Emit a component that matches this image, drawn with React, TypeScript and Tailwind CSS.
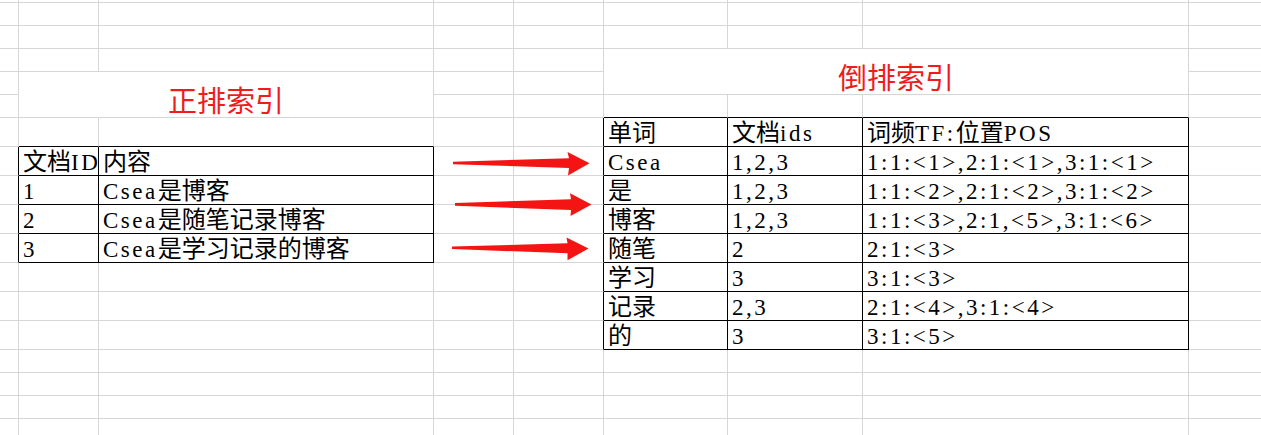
import React from "react";

const cjkTest = /[\u2E80-\u9FFF\uF900-\uFAFF\uFF00-\uFFEF\u3000-\u303F]/;
const splitRe = /[\u2E80-\u9FFF\uF900-\uFAFF\uFF00-\uFFEF\u3000-\u303F]+|[^\u2E80-\u9FFF\uF900-\uFAFF\uFF00-\uFFEF\u3000-\u303F]+/g;

function Txt({ s }: { s: string }) {
  const parts = s.match(splitRe) ?? [];
  return (
    <span className="leading-none text-black">
      {parts.map((p, i) =>
        cjkTest.test(p) ? (
          <span key={i} className="font-['Noto_Sans_CJK_SC',sans-serif] text-[24px] leading-none">
            {p}
          </span>
        ) : (
          <span
            key={i}
            className="font-['Liberation_Serif','Noto_Sans_CJK_SC',serif] text-[23px] leading-none tracking-[2.5px]"
          >
            {p}
          </span>
        )
      )}
    </span>
  );
}

const content: Record<string, string> = {
  "7,1": "文档ID",
  "7,2": "内容",
  "8,1": "1",
  "8,2": "Csea是博客",
  "9,1": "2",
  "9,2": "Csea是随笔记录博客",
  "10,1": "3",
  "10,2": "Csea是学习记录的博客",
  "6,5": "单词",
  "6,6": "文档ids",
  "6,7": "词频TF:位置POS",
  "7,5": "Csea",
  "7,6": "1,2,3",
  "7,7": "1:1:<1>,2:1:<1>,3:1:<1>",
  "8,5": "是",
  "8,6": "1,2,3",
  "8,7": "1:1:<2>,2:1:<2>,3:1:<2>",
  "9,5": "博客",
  "9,6": "1,2,3",
  "9,7": "1:1:<3>,2:1,<5>,3:1:<6>",
  "10,5": "随笔",
  "10,6": "2",
  "10,7": "2:1:<3>",
  "11,5": "学习",
  "11,6": "3",
  "11,7": "3:1:<3>",
  "12,5": "记录",
  "12,6": "2,3",
  "12,7": "2:1:<4>,3:1:<4>",
  "13,5": "的",
  "13,6": "3",
  "13,7": "3:1:<5>",
};

function inTable(r: number, c: number) {
  return (r >= 7 && r <= 10 && c >= 1 && c <= 2) || (r >= 6 && r <= 13 && c >= 5 && c <= 7);
}

const covered = new Set(["4,2", "5,1", "5,2", "3,6", "3,7", "4,5", "4,6", "4,7"]);

const ROWS = 18;
const COLS = 9;

export default function App() {
  const cells: React.ReactNode[] = [];
  for (let r = 0; r < ROWS; r++) {
    for (let c = 0; c < COLS; c++) {
      const key = `${r},${c}`;
      if (covered.has(key)) continue;
      let cs = 1;
      let rs = 1;
      let title: string | null = null;
      let spanCls = "";
      if (r === 4 && c === 1) {
        cs = 2;
        rs = 2;
        title = "正排索引";
        spanCls = "col-span-2 row-span-2";
      } else if (r === 3 && c === 5) {
        cs = 3;
        rs = 2;
        title = "倒排索引";
        spanCls = "col-span-3 row-span-2";
      }
      const rEnd = r + rs - 1;
      const cEnd = c + cs - 1;
      const rightBlack = inTable(r, cEnd) || inTable(r, cEnd + 1);
      const bottomBlack = inTable(rEnd, c) || inTable(rEnd + 1, c);
      const rightCls =
        cEnd === COLS - 1 ? "" : rightBlack ? "border-r border-r-black" : "border-r border-r-[#d6d6d6]";
      const bottomCls = bottomBlack ? "border-b border-b-black" : "border-b border-b-[#d6d6d6]";
      const text = content[key];
      if (title) {
        cells.push(
          <div key={key} className={`${spanCls} ${rightCls} ${bottomCls} flex items-end justify-center pb-[3px]`}>
            <span className="font-['Noto_Sans_CJK_SC',sans-serif] text-[29px] leading-[30px] text-[#f01c1c]">
              {title}
            </span>
          </div>
        );
      } else {
        cells.push(
          <div
            key={key}
            className={`${rightCls} ${bottomCls} flex items-end pl-[4px] pb-[1px] whitespace-nowrap font-['Liberation_Serif',serif] text-[23px] leading-none`}
          >
            {text ? <Txt s={text} /> : null}
          </div>
        );
      }
    }
  }

  return (
    <div className="relative w-[1261px] h-[435px] overflow-hidden bg-white">
      <div className="grid grid-cols-[19px_80px_335px_80px_90px_124px_135px_326px_72px] grid-rows-[3px_repeat(5,23px)_repeat(8,29px)_repeat(4,23px)]">
        {cells}
      </div>
      <svg className="absolute left-0 top-0 pointer-events-none" width="1261" height="435" viewBox="0 0 1261 435">
        <polygon
          fill="#f51414"
          points="453,161.7 569,158.3 567.5,152 589.5,163.3 568,175.5 569,168 453,164.3"
        />
        <polygon
          fill="#f51414"
          points="455,203 571,199.3 570,193.3 591.5,204.5 570.5,216 571,210 455,205.8"
        />
        <polygon
          fill="#f51414"
          points="452,246.5 567.5,243.3 566.5,237.5 588.5,248.5 567.5,260.3 567.5,253.3 452,249"
        />
      </svg>
    </div>
  );
}
